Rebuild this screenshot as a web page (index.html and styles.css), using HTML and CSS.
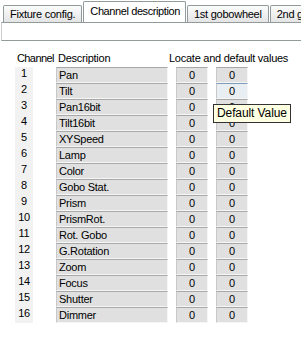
FILE: index.html
```html
<!DOCTYPE html>
<html lang="en">
  <head>
    <meta charset="UTF-8" />
    <title>Channel description</title>
    <link rel="stylesheet" href="styles.css">
  </head>
  <body>
    <nav class="tabs">
      <button class="tab">Fixture config.</button>
      <button class="tab valgt">Channel description</button>
      <button class="tab">1st gobowheel</button>
      <button class="tab">2nd gobowheel</button>
    </nav>
    <div class="panel"></div>

    <main class="kanaler">
      <div class="hoved nr-hoved">Channel</div>
      <div class="hoved navn-hoved">Description</div>
      <div class="hoved locate-hoved">Locate and default values</div>

      <div class="nr">1</div><div class="felt navn">Pan</div><div class="felt">0</div><div class="felt">0</div>
      <div class="nr">2</div><div class="felt navn">Tilt</div><div class="felt">0</div><div class="felt aktiv">0</div>
      <div class="nr">3</div><div class="felt navn">Pan16bit</div><div class="felt">0</div><div class="felt">0</div>
      <div class="nr">4</div><div class="felt navn">Tilt16bit</div><div class="felt">0</div><div class="felt">0</div>
      <div class="nr">5</div><div class="felt navn">XYSpeed</div><div class="felt">0</div><div class="felt">0</div>
      <div class="nr">6</div><div class="felt navn">Lamp</div><div class="felt">0</div><div class="felt">0</div>
      <div class="nr">7</div><div class="felt navn">Color</div><div class="felt">0</div><div class="felt">0</div>
      <div class="nr">8</div><div class="felt navn">Gobo Stat.</div><div class="felt">0</div><div class="felt">0</div>
      <div class="nr">9</div><div class="felt navn">Prism</div><div class="felt">0</div><div class="felt">0</div>
      <div class="nr">10</div><div class="felt navn">PrismRot.</div><div class="felt">0</div><div class="felt">0</div>
      <div class="nr">11</div><div class="felt navn">Rot. Gobo</div><div class="felt">0</div><div class="felt">0</div>
      <div class="nr">12</div><div class="felt navn">G.Rotation</div><div class="felt">0</div><div class="felt">0</div>
      <div class="nr">13</div><div class="felt navn">Zoom</div><div class="felt">0</div><div class="felt">0</div>
      <div class="nr">14</div><div class="felt navn">Focus</div><div class="felt">0</div><div class="felt">0</div>
      <div class="nr">15</div><div class="felt navn">Shutter</div><div class="felt">0</div><div class="felt">0</div>
      <div class="nr">16</div><div class="felt navn">Dimmer</div><div class="felt">0</div><div class="felt">0</div>
    </main>

    <div class="tooltip">Default Value</div>
  </body>
</html>
```

FILE: styles.css
```css
body {
  margin: 0;
  background-color: white;
  font-family: "Liberation Sans", Arial, sans-serif;
  font-size: 11px;
  letter-spacing: -0.25px;
  color: black;
  overflow: hidden;
  position: relative;
}

/* faner */
.tabs {
  display: flex;
  align-items: flex-end;
  height: 22px;
  padding-left: 3px;
  white-space: nowrap;
  overflow: hidden;
}
.tab {
  font: inherit;
  letter-spacing: inherit;
  height: 17px;
  padding: 0 6px;
  margin-right: 1px;
  background: linear-gradient(#fcfcfc, #e4e4e4);
  border: 1px solid #919b9c;
  border-bottom: none;
  border-radius: 2px 2px 0 0;
  color: black;
  flex-shrink: 0;
}
.valgt {
  height: 22px;
  background: white;
  margin-bottom: -1px;
  padding: 0 5px 3px 6px;
  letter-spacing: -0.4px;
  position: relative;
  z-index: 1;
}
.panel {
  height: 17px;
  margin-left: 1px;
  border-top: 1px solid #919b9c;
  border-left: 1px solid #d0d0d0;
  border-bottom: 1px solid #919b9c;
}

/* kanaltabel */
.kanaler {
  display: grid;
  grid-template-columns: 32px 112px 32px 32px;
  grid-template-rows: 18px;
  grid-auto-rows: 16px;
  column-gap: 8px;
  margin: 8px 0 0 16px;
  width: max-content;
}
.hoved {
  line-height: 14px;
  padding-top: 2px;
  white-space: nowrap;
}
.nr-hoved {
  margin-left: 1px;
  letter-spacing: -0.6px;
}
.navn-hoved {
  margin-left: 2px;
}
.locate-hoved {
  grid-column: 3 / span 2;
  margin-left: -7px;
}
.nr {
  width: 18px;
  margin-left: -1px;
  background-color: #f2f2f2;
  text-align: center;
  line-height: 12px;
}
.felt {
  background-color: #e0e0e0;
  border-top: 1px solid #a8a8a8;
  border-left: 1px solid #c8c8c8;
  border-right: 1px solid #f6f6f6;
  border-bottom: 1px solid #f6f6f6;
  line-height: 14px;
  text-align: center;
}
.navn {
  text-align: left;
  padding-left: 2px;
}
.aktiv {
  background-color: #e9eef3;
  border-top-color: #7f9db9;
}

.tooltip {
  position: absolute;
  left: 213px;
  top: 104px;
  height: 17px;
  padding: 0 3px;
  background-color: #ffffe1;
  border: 1px solid #333;
  font-size: 12px;
  letter-spacing: -0.1px;
  line-height: 17px;
}
```
